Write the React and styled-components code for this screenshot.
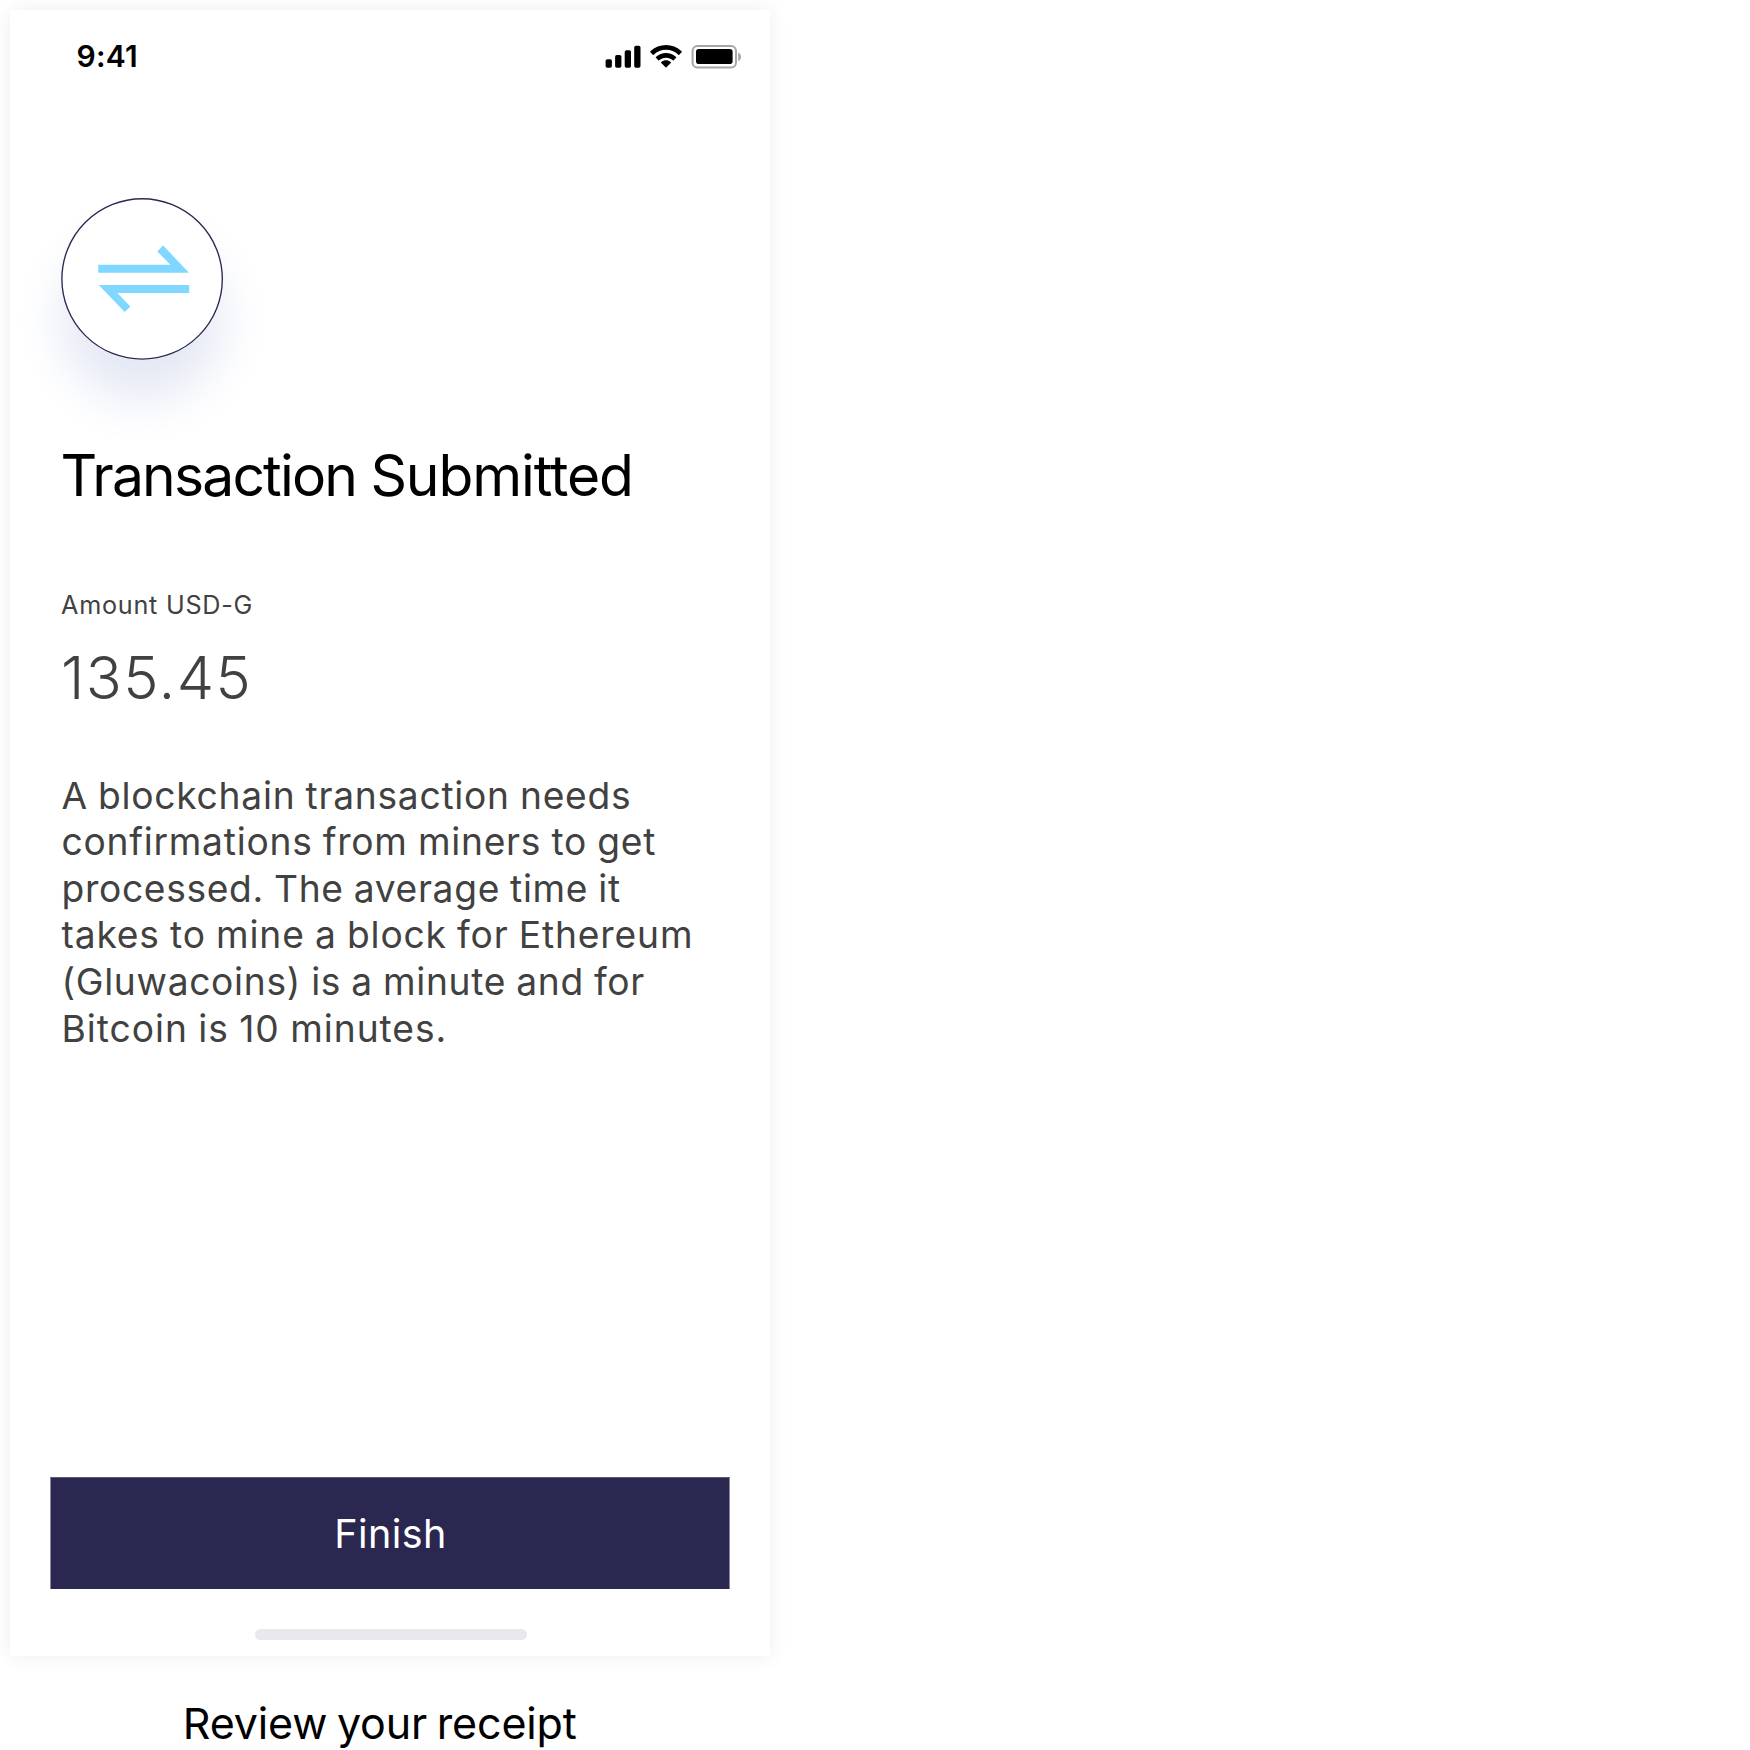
import React from 'react';
import styled, { createGlobalStyle } from 'styled-components';

const GlobalStyle = createGlobalStyle`
  *, *::before, *::after { box-sizing: border-box; }
  html { background: #ffffff; }
  body {
    margin: 0;
    font-family: Inter, "Liberation Sans", sans-serif;
    color: #000000;
  }
`;

const Page = styled.main`
  display: flex;
  flex-direction: column;
  align-items: flex-start;
  height: 1750px;
  padding: 10px 0 0 10px;
  overflow: hidden;
`;

const Screen = styled.section`
  display: flex;
  flex-direction: column;
  width: 760px;
  height: 1646px;
  background: #ffffff;
  box-shadow: 0 0 20px rgba(0, 0, 0, 0.07);
`;

const StatusBar = styled.header`
  display: flex;
  justify-content: space-between;
  height: 92px;
  padding: 28px 29px 0 66.6px;
`;

const Clock = styled.time`
  font-size: 30px;
  font-weight: 600;
  line-height: 36px;
  letter-spacing: 0.2px;
`;

const Indicators = styled.svg`
  display: block;
  width: 136px;
  height: 24px;
  margin-top: 7px;
`;

const Content = styled.div`
  display: flex;
  flex-direction: column;
  align-items: flex-start;
  padding: 96px 0 0 51px;
`;

const Badge = styled.div`
  width: 162px;
  height: 162px;
  border-radius: 50%;
  box-shadow: 0 40px 50px #e4e8f4;

  svg { display: block; }
`;

const Title = styled.h1`
  margin: 82px 0 0 -0.5px;
  font-size: 57px;
  font-weight: 400;
  line-height: 68px;
  white-space: nowrap;
`;

const TitleWord = styled.span`
  letter-spacing: ${(p) => p.$tracking}px;
`;

const Label = styled.div`
  margin-top: 80px;
  font-size: 25.2px;
  line-height: 30px;
  letter-spacing: 0.75px;
  color: #414141;
`;

const Amount = styled.div`
  margin-top: 20.8px;
  font-size: 59.4px;
  font-weight: 300;
  line-height: 72px;
  letter-spacing: 1.5px;
  color: #414141;
`;

const Note = styled.p`
  margin: 59.8px 0 0 0.5px;
  font-size: 37.2px;
  line-height: 46.6px;
  color: #414141;
`;

const NoteLine = styled.span`
  display: block;
  white-space: nowrap;
  word-spacing: -1px;
  letter-spacing: ${(p) => p.$tracking}px;
`;

const Footer = styled.footer`
  display: flex;
  flex-direction: column;
  align-items: center;
  margin-top: auto;
  padding: 0 40px 16px;
`;

const FinishButton = styled.button`
  width: 100%;
  height: 112px;
  padding: 0 0 0 1px;
  border: 1px solid #8b89a2;
  border-top-color: #5d5b7a;
  border-bottom-width: 0;
  border-radius: 0;
  background: #2a2751;
  color: #ffffff;
  font: 400 39.5px/112px Inter, "Liberation Sans", sans-serif;
  letter-spacing: 0.4px;
`;

const HomeIndicator = styled.div`
  width: 272px;
  height: 11px;
  margin: 40px 0 0 2px;
  border-radius: 6px;
  background: #e8e8ed;
`;

const Caption = styled.p`
  width: 760px;
  margin: 41px 0 0;
  padding-right: 20.5px;
  font-size: 43px;
  line-height: 52px;
  letter-spacing: -0.16px;
  word-spacing: -2.2px;
  text-align: center;
`;

const note = [
  ['A blockchain transaction needs', 0.73],
  ['confirmations from miners to get', 0.74],
  ['processed. The average time it', 0.66],
  ['takes to mine a block for Ethereum', 0.83],
  ['(Gluwacoins) is a minute and for', 0.68],
  ['Bitcoin is 10 minutes.', 0.96],
];

function StatusIcons() {
  return (
    <Indicators viewBox="0 0 136 24" aria-hidden="true">
      <rect x="0.6" y="14.2" width="6.3" height="8.6" rx="1.7" />
      <rect x="10.1" y="10" width="6.3" height="12.8" rx="1.7" />
      <rect x="19.7" y="5.3" width="6.3" height="17.5" rx="1.7" />
      <rect x="29.2" y="0.7" width="6.3" height="22.1" rx="1.7" />
      <g transform="translate(45.2 0.1) scale(2.07)">
        <path d="M7.637 2.277C9.853 2.277 11.984 3.129 13.59 4.656C13.711 4.774 13.904 4.772 14.023 4.652L15.179 3.486C15.239 3.425 15.273 3.343 15.272 3.257C15.272 3.172 15.237 3.09 15.176 3.03C10.961-1.01 4.311-1.01 0.096 3.03C0.035 3.09 0 3.171 0 3.257C-0.001 3.343 0.033 3.425 0.093 3.486L1.249 4.652C1.368 4.772 1.562 4.774 1.683 4.656C3.289 3.129 5.42 2.277 7.637 2.277Z" />
        <path d="M7.637 6.073C8.854 6.073 10.028 6.525 10.93 7.343C11.052 7.459 11.244 7.456 11.363 7.337L12.518 6.17C12.579 6.109 12.613 6.026 12.612 5.94C12.611 5.854 12.575 5.771 12.513 5.711C9.766 3.155 5.51 3.155 2.762 5.711C2.7 5.771 2.665 5.854 2.664 5.94C2.663 6.026 2.697 6.109 2.758 6.17L3.912 7.337C4.031 7.456 4.224 7.459 4.346 7.343C5.247 6.526 6.42 6.073 7.637 6.073Z" />
        <path d="M9.95 8.627C10.011 8.566 10.045 8.482 10.044 8.395C10.042 8.308 10.005 8.226 9.94 8.167C8.611 7.04 6.663 7.04 5.333 8.167C5.269 8.226 5.231 8.308 5.229 8.395C5.228 8.482 5.262 8.566 5.323 8.627L7.42 10.742C7.48 10.802 7.557 10.836 7.637 10.836C7.716 10.836 7.793 10.802 7.853 10.742Z" />
      </g>
      <rect x="87.6" y="1.1" width="43.4" height="21.3" rx="4.9" fill="none" stroke="#a6a6a6" strokeWidth="2" />
      <rect x="91" y="4.1" width="36.6" height="15" rx="2.8" />
      <path d="M133.2 7.4C135.2 8.2 136 9.9 136 11.8S135.2 15.4 133.2 16.2Z" fill="#a6a6a6" />
    </Indicators>
  );
}

function TransferIcon() {
  return (
    <svg width="162" height="162" viewBox="61 198 162 162" aria-hidden="true">
      <circle cx="142.1" cy="278.9" r="80.2" fill="#ffffff" stroke="#2a2751" strokeWidth="1.35" />
      <g fill="#80d7ff">
        <path d="M98.2 264.8H170.4L157.3 251.4L163.1 245.6L189 272.7H98.2Z" />
        <path d="M189.2 285.1H98.8L124.7 312.1L130.4 306.5L117.3 293H189.2Z" />
      </g>
    </svg>
  );
}

export default function App() {
  return (
    <Page>
      <GlobalStyle />
      <Screen>
        <StatusBar>
          <Clock>9:41</Clock>
          <StatusIcons />
        </StatusBar>
        <Content>
          <Badge>
            <TransferIcon />
          </Badge>
          <Title>
            <TitleWord $tracking={-1.82}>Transaction </TitleWord>
            <TitleWord $tracking={-1.1}>Submitted</TitleWord>
          </Title>
          <Label>Amount USD-G</Label>
          <Amount>135.45</Amount>
          <Note>
            {note.map(([text, tracking]) => (
              <NoteLine key={text} $tracking={tracking}>{text}</NoteLine>
            ))}
          </Note>
        </Content>
        <Footer>
          <FinishButton type="button">Finish</FinishButton>
          <HomeIndicator />
        </Footer>
      </Screen>
      <Caption>Review your receipt</Caption>
    </Page>
  );
}
